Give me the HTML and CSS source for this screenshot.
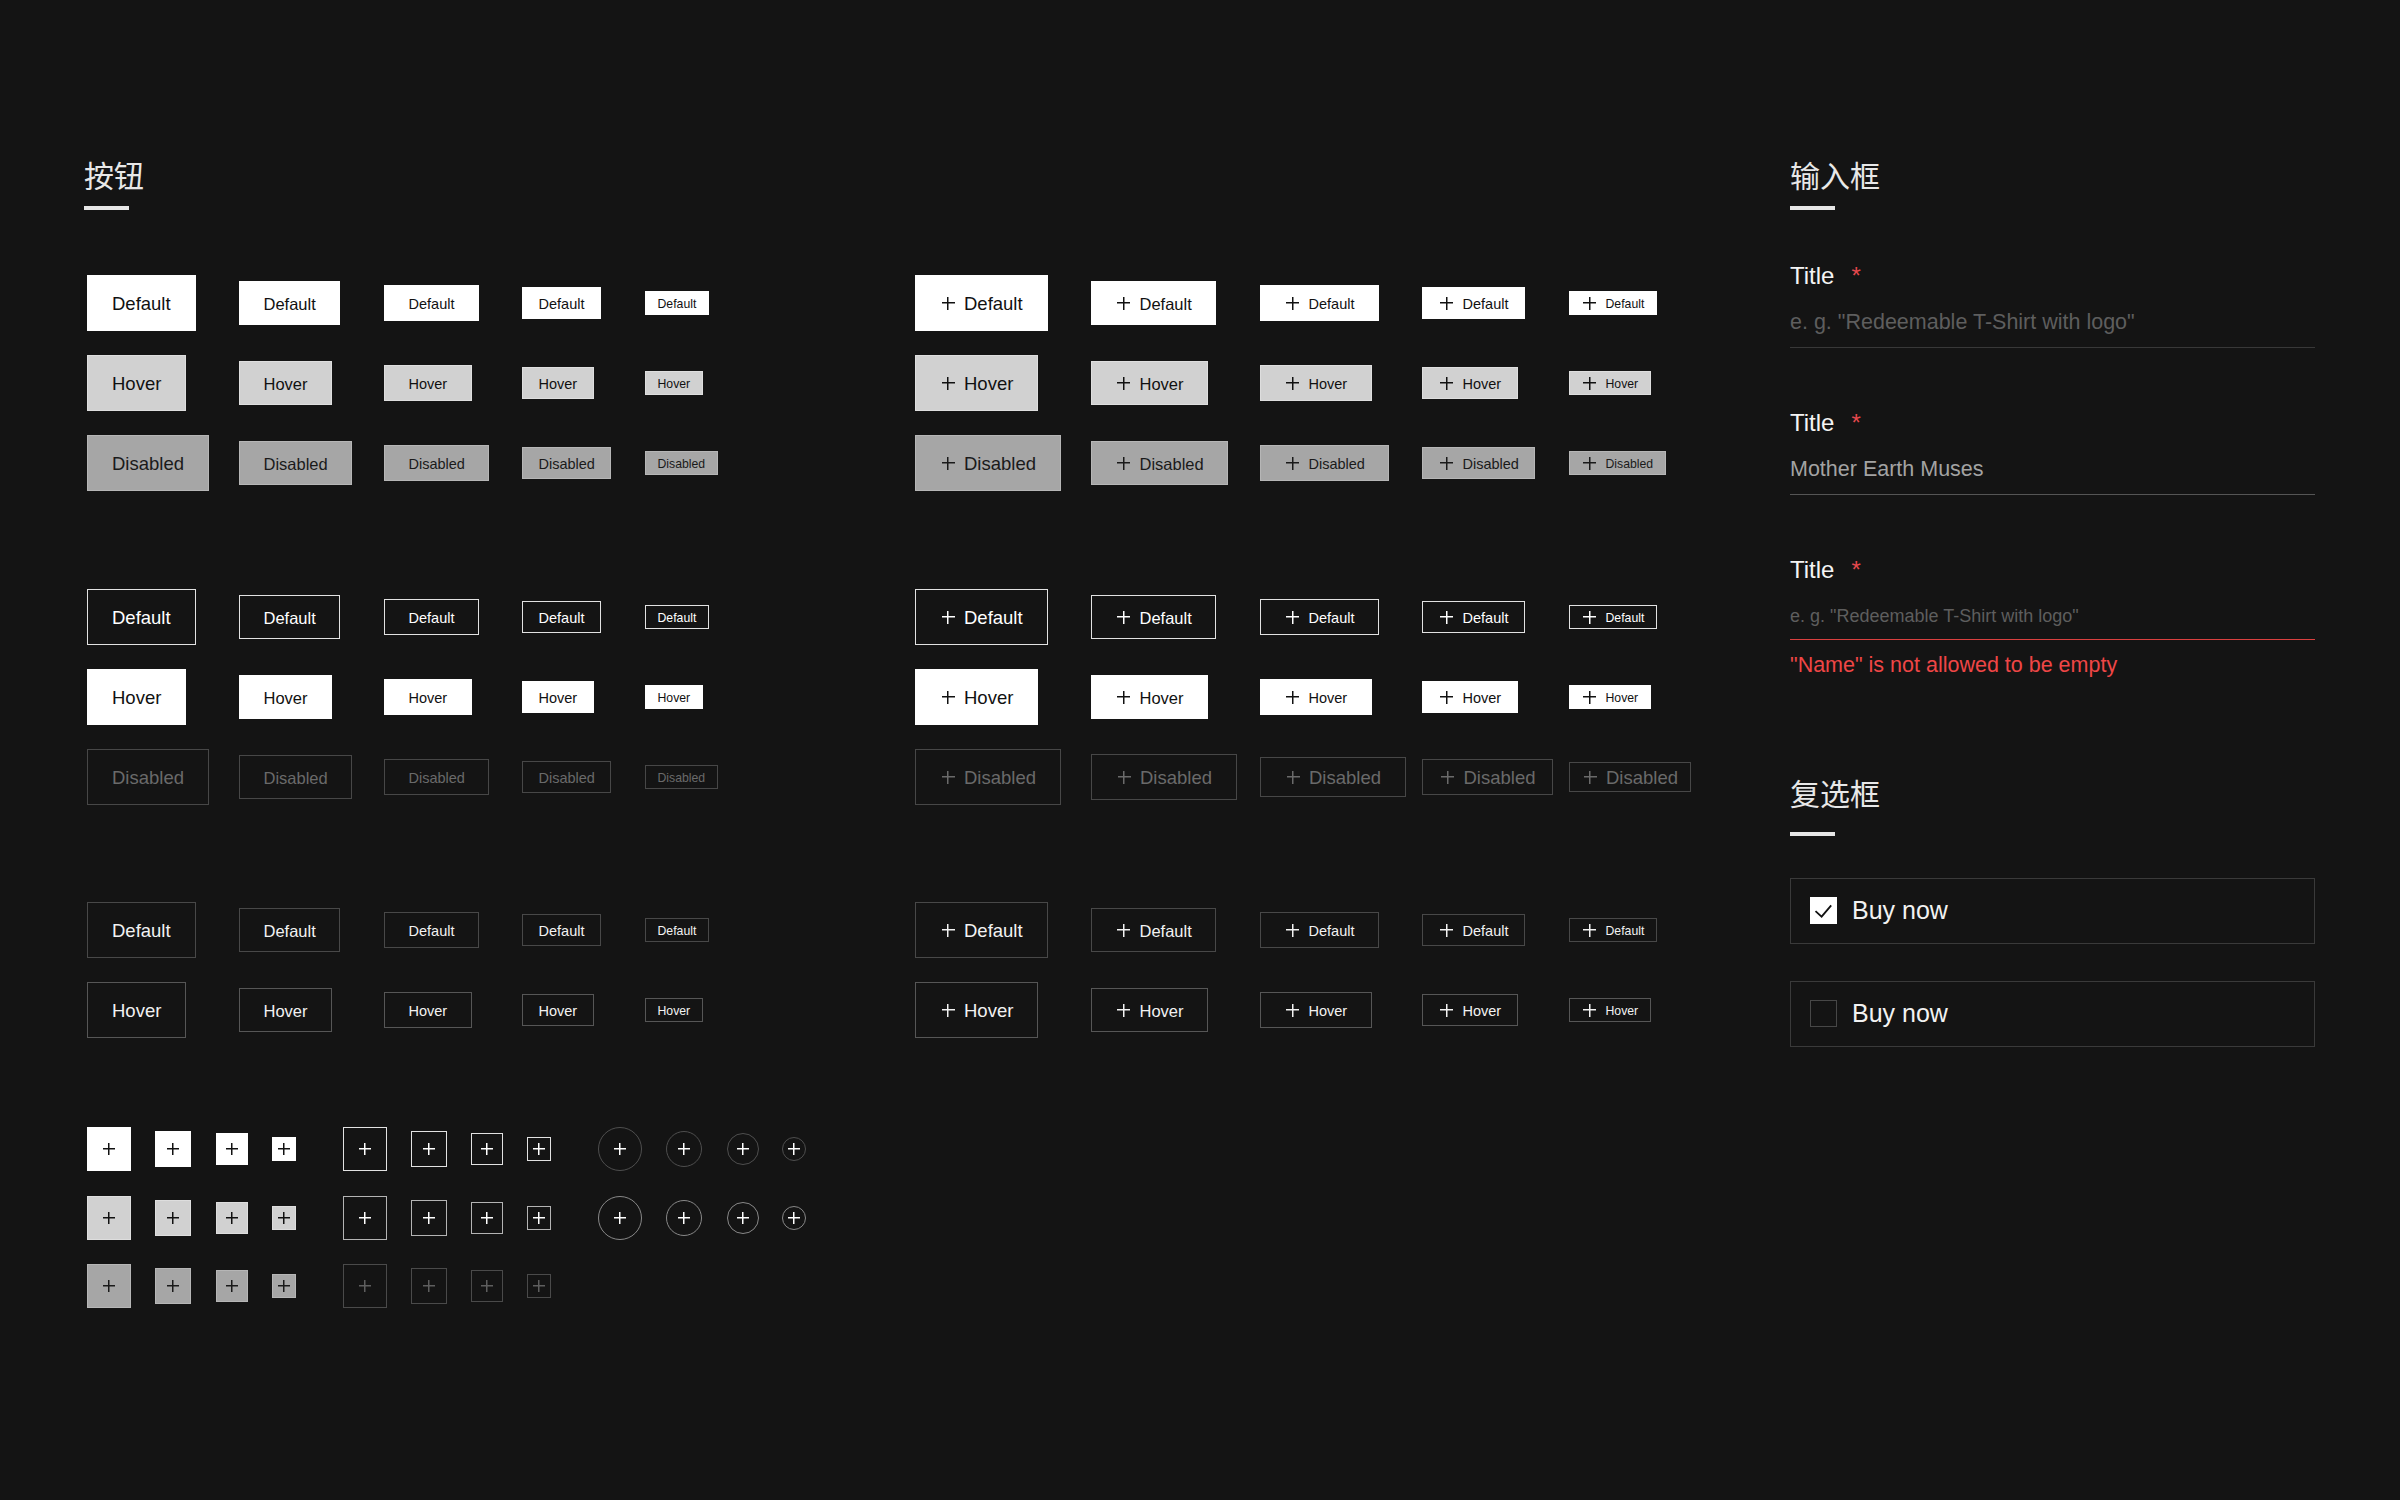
FILE: index.html
```html
<!DOCTYPE html>
<html lang="zh-CN">
<head>
<meta charset="utf-8">
<title>组件</title>
<link rel="stylesheet" href="styles.css">
</head>
<body>
<div class="page">
  <section class="col-buttons">
    <h2 class="heading">按钮</h2>
    <div class="rule"></div>

    <!-- filled buttons -->
    <div class="btn-grid">
      <button class="btn fill s1">Default</button>
      <button class="btn fill s2">Default</button>
      <button class="btn fill s3">Default</button>
      <button class="btn fill s4">Default</button>
      <button class="btn fill s5">Default</button>
      <button class="btn fill s1"><i class="plus"></i>Default</button>
      <button class="btn fill s2"><i class="plus"></i>Default</button>
      <button class="btn fill s3"><i class="plus"></i>Default</button>
      <button class="btn fill s4"><i class="plus"></i>Default</button>
      <button class="btn fill s5"><i class="plus"></i>Default</button>

      <button class="btn fill-hover s1">Hover</button>
      <button class="btn fill-hover s2">Hover</button>
      <button class="btn fill-hover s3">Hover</button>
      <button class="btn fill-hover s4">Hover</button>
      <button class="btn fill-hover s5">Hover</button>
      <button class="btn fill-hover s1"><i class="plus"></i>Hover</button>
      <button class="btn fill-hover s2"><i class="plus"></i>Hover</button>
      <button class="btn fill-hover s3"><i class="plus"></i>Hover</button>
      <button class="btn fill-hover s4"><i class="plus"></i>Hover</button>
      <button class="btn fill-hover s5"><i class="plus"></i>Hover</button>

      <button class="btn fill-dis s1">Disabled</button>
      <button class="btn fill-dis s2">Disabled</button>
      <button class="btn fill-dis s3">Disabled</button>
      <button class="btn fill-dis s4">Disabled</button>
      <button class="btn fill-dis s5">Disabled</button>
      <button class="btn fill-dis s1"><i class="plus"></i>Disabled</button>
      <button class="btn fill-dis s2"><i class="plus"></i>Disabled</button>
      <button class="btn fill-dis s3"><i class="plus"></i>Disabled</button>
      <button class="btn fill-dis s4"><i class="plus"></i>Disabled</button>
      <button class="btn fill-dis s5"><i class="plus"></i>Disabled</button>
    </div>

    <!-- outlined buttons -->
    <div class="btn-grid spaced">
      <button class="btn line s1">Default</button>
      <button class="btn line s2">Default</button>
      <button class="btn line s3">Default</button>
      <button class="btn line s4">Default</button>
      <button class="btn line s5">Default</button>
      <button class="btn line s1"><i class="plus"></i>Default</button>
      <button class="btn line s2"><i class="plus"></i>Default</button>
      <button class="btn line s3"><i class="plus"></i>Default</button>
      <button class="btn line s4"><i class="plus"></i>Default</button>
      <button class="btn line s5"><i class="plus"></i>Default</button>

      <button class="btn line-hover s1">Hover</button>
      <button class="btn line-hover s2">Hover</button>
      <button class="btn line-hover s3">Hover</button>
      <button class="btn line-hover s4">Hover</button>
      <button class="btn line-hover s5">Hover</button>
      <button class="btn line-hover s1"><i class="plus"></i>Hover</button>
      <button class="btn line-hover s2"><i class="plus"></i>Hover</button>
      <button class="btn line-hover s3"><i class="plus"></i>Hover</button>
      <button class="btn line-hover s4"><i class="plus"></i>Hover</button>
      <button class="btn line-hover s5"><i class="plus"></i>Hover</button>

      <button class="btn line-dis s1">Disabled</button>
      <button class="btn line-dis s2">Disabled</button>
      <button class="btn line-dis s3">Disabled</button>
      <button class="btn line-dis s4">Disabled</button>
      <button class="btn line-dis s5">Disabled</button>
      <button class="btn line-dis s1"><i class="plus"></i>Disabled</button>
      <button class="btn line-dis d2"><i class="plus"></i>Disabled</button>
      <button class="btn line-dis d3"><i class="plus"></i>Disabled</button>
      <button class="btn line-dis d4"><i class="plus"></i>Disabled</button>
      <button class="btn line-dis d5"><i class="plus"></i>Disabled</button>
    </div>

    <!-- ghost buttons -->
    <div class="btn-grid spaced-sm">
      <button class="btn ghost s1">Default</button>
      <button class="btn ghost s2">Default</button>
      <button class="btn ghost s3">Default</button>
      <button class="btn ghost s4">Default</button>
      <button class="btn ghost s5">Default</button>
      <button class="btn ghost s1"><i class="plus"></i>Default</button>
      <button class="btn ghost s2"><i class="plus"></i>Default</button>
      <button class="btn ghost s3"><i class="plus"></i>Default</button>
      <button class="btn ghost s4"><i class="plus"></i>Default</button>
      <button class="btn ghost s5"><i class="plus"></i>Default</button>

      <button class="btn ghost-hover s1">Hover</button>
      <button class="btn ghost-hover s2">Hover</button>
      <button class="btn ghost-hover s3">Hover</button>
      <button class="btn ghost-hover s4">Hover</button>
      <button class="btn ghost-hover s5">Hover</button>
      <button class="btn ghost-hover s1"><i class="plus"></i>Hover</button>
      <button class="btn ghost-hover s2"><i class="plus"></i>Hover</button>
      <button class="btn ghost-hover s3"><i class="plus"></i>Hover</button>
      <button class="btn ghost-hover s4"><i class="plus"></i>Hover</button>
      <button class="btn ghost-hover s5"><i class="plus"></i>Hover</button>
    </div>

    <!-- icon-only buttons -->
    <div class="icon-grid">
      <button class="ib fill i1"><i class="plus sm"></i></button>
      <button class="ib fill i2"><i class="plus sm"></i></button>
      <button class="ib fill i3"><i class="plus sm"></i></button>
      <button class="ib fill i4"><i class="plus sm"></i></button>
      <button class="ib line i1"><i class="plus sm"></i></button>
      <button class="ib line i2"><i class="plus sm"></i></button>
      <button class="ib line i3"><i class="plus sm"></i></button>
      <button class="ib line i4"><i class="plus sm"></i></button>
      <button class="ib round i1"><i class="plus sm"></i></button>
      <button class="ib round i2"><i class="plus sm"></i></button>
      <button class="ib round i3"><i class="plus sm"></i></button>
      <button class="ib round i4"><i class="plus sm"></i></button>

      <button class="ib fill-hover i1"><i class="plus sm"></i></button>
      <button class="ib fill-hover i2"><i class="plus sm"></i></button>
      <button class="ib fill-hover i3"><i class="plus sm"></i></button>
      <button class="ib fill-hover i4"><i class="plus sm"></i></button>
      <button class="ib line-soft i1"><i class="plus sm"></i></button>
      <button class="ib line-soft i2"><i class="plus sm"></i></button>
      <button class="ib line-soft i3"><i class="plus sm"></i></button>
      <button class="ib line-soft i4"><i class="plus sm"></i></button>
      <button class="ib round-hover i1"><i class="plus sm"></i></button>
      <button class="ib round-hover i2"><i class="plus sm"></i></button>
      <button class="ib round-hover i3"><i class="plus sm"></i></button>
      <button class="ib round-hover i4"><i class="plus sm"></i></button>

      <button class="ib fill-dis i1"><i class="plus sm"></i></button>
      <button class="ib fill-dis i2"><i class="plus sm"></i></button>
      <button class="ib fill-dis i3"><i class="plus sm"></i></button>
      <button class="ib fill-dis i4"><i class="plus sm"></i></button>
      <button class="ib line-dis i1"><i class="plus sm"></i></button>
      <button class="ib line-dis i2"><i class="plus sm"></i></button>
      <button class="ib line-dis i3"><i class="plus sm"></i></button>
      <button class="ib line-dis i4"><i class="plus sm"></i></button>
    </div>
  </section>

  <section class="col-forms">
    <h2 class="heading">输入框</h2>
    <div class="rule"></div>

    <div class="field first">
      <div class="label">Title<span class="req">*</span></div>
      <div class="input">e. g. "Redeemable T-Shirt with logo"</div>
    </div>

    <div class="field">
      <div class="label">Title<span class="req">*</span></div>
      <div class="input filled">Mother Earth Muses</div>
    </div>

    <div class="field">
      <div class="label">Title<span class="req">*</span></div>
      <div class="input small invalid">e. g. "Redeemable T-Shirt with logo"</div>
      <div class="error">"Name" is not allowed to be empty</div>
    </div>

    <h2 class="heading later">复选框</h2>
    <div class="rule wide-gap"></div>

    <label class="check-card first">
      <span class="box checked">
        <svg viewBox="0 0 27 27" width="27" height="27"><path d="M5.5 14.2 L11.6 19.6 L21.2 8.4" fill="none" stroke="#111" stroke-width="1.8"/></svg>
      </span>
      <span class="check-text">Buy now</span>
    </label>
    <label class="check-card">
      <span class="box"></span>
      <span class="check-text">Buy now</span>
    </label>
  </section>
</div>
</body>
</html>
```

FILE: styles.css
```css
html, body {
  margin: 0;
  background: #141414;
}

body {
  font-family: "Liberation Sans", Arial, sans-serif;
  color: #f0f0f0;
}

.page {
  display: flex;
  padding: 159px 0 0 84px;
}

.col-buttons {
  width: 1706px;
}

.col-forms {
  width: 525px;
}

/* section titles */
.heading {
  margin: 0;
  font: 400 30px/30px "Noto Sans CJK SC", sans-serif;
  color: #e8e8e8;
}

.heading.later {
  margin-top: 100px;
}

.rule {
  width: 45px;
  height: 4px;
  margin-top: 17px;
  background: #e6e6e6;
}

.rule.wide-gap {
  margin-top: 25px;
}

/* button grids */
.btn-grid {
  display: grid;
  grid-template-columns: 152px 145px 138px 123px 270px 176px 169px 162px 147px auto;
  grid-auto-rows: 56px;
  row-gap: 24px;
  align-items: center;
  justify-items: start;
  margin: 65px 0 0 3px;
}

.btn-grid.spaced {
  margin-top: 98px;
}

.btn-grid.spaced-sm {
  margin-top: 97px;
}

.btn,
.ib {
  display: inline-flex;
  align-items: center;
  justify-content: center;
  box-sizing: border-box;
  margin: 0;
  border: 1px solid transparent;
  border-radius: 0;
  cursor: pointer;
}

.btn {
  font-family: "Liberation Sans", Arial, sans-serif;
  white-space: nowrap;
  line-height: 1;
}

.ib {
  padding: 0;
}

/* sizes; the 2px top padding sets the label a hair below centre */
.s1 { height: 56px; font-size: 18.5px; padding: 2px 24px 0; }
.s2 { height: 44px; font-size: 16.5px; padding: 2px 23.5px 0; }
.s3 { height: 36px; font-size: 14.5px; padding: 2px 23.5px 0; }
.s4 { height: 32px; font-size: 14.5px; padding: 2px 15.5px 0; }
.s5 { height: 24px; font-size: 12.25px; padding: 2px 11.5px 0; }

/* disabled outlined buttons with icon keep the large label */
.d2 { height: 46px; font-size: 18.5px; padding: 2px 24px 0; }
.d3 { height: 40px; font-size: 18.5px; padding: 2px 24px 0; }
.d4 { height: 36px; font-size: 18.5px; padding: 2px 16.5px 0; }
.d5 { height: 30px; font-size: 18.5px; padding: 2px 12px 0; }

/* variants */
.fill { background: #ffffff; border-color: #ffffff; color: #111111; }
.fill-hover { background: #d1d1d1; border-color: #dedede; color: #111111; }
.fill-dis { background: #a6a6a6; border-color: #b6b6b6; color: #1a1a1a; }

.line { background: transparent; border-color: #e2e2e2; color: #ffffff; }
.line-hover { background: #ffffff; border-color: #ffffff; color: #111111; }
.line-dis { background: transparent; border-color: #474747; color: #6a6a6a; }
.line-soft { background: transparent; border-color: #b4b4b4; color: #ffffff; }

.ghost { background: transparent; border-color: #484848; color: #f2f2f2; }
.ghost-hover { background: transparent; border-color: #565656; color: #f2f2f2; }

.round { background: transparent; border-color: #4e4e4e; border-radius: 50%; color: #ffffff; }
.round-hover { background: transparent; border-color: #888888; border-radius: 50%; color: #ffffff; }

.ib.line-dis { color: #5e5e5e; border-color: #4a4a4a; }

/* plus glyph drawn from two bars */
.plus {
  display: inline-block;
  flex: none;
  width: 16px;
  height: 16px;
  margin: -2px 8px 0 0;
  background:
    linear-gradient(currentColor, currentColor) center / 13px 1.5px no-repeat,
    linear-gradient(currentColor, currentColor) center / 1.5px 13px no-repeat;
}

.plus.sm {
  margin: 0;
  background:
    linear-gradient(currentColor, currentColor) center / 12px 1.5px no-repeat,
    linear-gradient(currentColor, currentColor) center / 1.5px 12px no-repeat;
}

/* icon-only buttons */
.icon-grid {
  display: grid;
  grid-template-columns: 68px 61px 56px 71px 68px 60px 56px 71px 68px 61px 55px auto;
  grid-auto-rows: 44px;
  row-gap: 24.5px;
  align-items: center;
  justify-items: start;
  margin: 89px 0 0 3px;
}

.i1 { width: 44px; height: 44px; }
.i2 { width: 36px; height: 36px; }
.i3 { width: 32px; height: 32px; }
.i4 { width: 24px; height: 24px; }

/* form fields */
.field {
  margin-top: 61px;
}

.field.first {
  margin-top: 52px;
}

.label {
  display: flex;
  font-size: 24px;
  line-height: 28px;
  color: #f4f4f4;
}

.req {
  margin-left: 17px;
  color: #e5484d;
}

.input {
  padding: 20px 0 13px;
  font-size: 21.5px;
  line-height: 24px;
  color: #5e5e5e;
  border-bottom: 1px solid #383838;
}

.input.filled {
  color: #a3a3a3;
  border-bottom-color: #555555;
}

.input.small {
  padding: 21.5px 0 13px;
  font-size: 18px;
  line-height: 20px;
}

.input.invalid {
  border-bottom-color: #d9403f;
}

.error {
  margin-top: 13px;
  font-size: 21.5px;
  line-height: 24px;
  color: #ef4646;
}

/* checkbox cards */
.check-card {
  display: flex;
  align-items: center;
  box-sizing: border-box;
  height: 66px;
  margin-top: 37px;
  padding-left: 19px;
  border: 1px solid #3a3a3a;
  cursor: pointer;
}

.check-card.first {
  margin-top: 42px;
}

.box {
  display: block;
  box-sizing: border-box;
  width: 27px;
  height: 27px;
  border: 1px solid #474747;
}

.box svg {
  display: block;
  margin: -1px;
}

.box.checked {
  background: #ffffff;
  border-color: #ffffff;
}

.check-text {
  margin-left: 15px;
  font-size: 25px;
  color: #f2f2f2;
}
```
